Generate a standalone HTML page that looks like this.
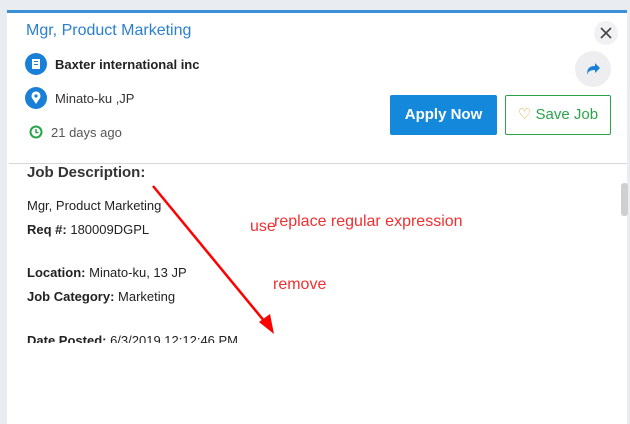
<!DOCTYPE html>
<html><head><style>
*{margin:0;padding:0;box-sizing:border-box}
body{width:630px;height:424px;background:#e9ecf1;font-family:"Liberation Sans",sans-serif;position:relative;overflow:hidden}
.card{position:absolute;left:7px;top:10px;width:620px;height:414px;background:#fff;border-top:3px solid #3a8fd6}
.a{position:absolute;white-space:nowrap}
.circ{position:absolute;width:22px;height:22px;border-radius:50%;background:#1a7fd6}
.t{color:#222;font-size:13px}
b{font-weight:bold}
.red{color:#f03030;font-size:16px;position:absolute;white-space:nowrap}
</style></head><body>
<div class="card"></div>
<div class="a" style="left:26px;top:22px;font-size:16px;color:#2a7fd0">Mgr, Product Marketing</div>
<div class="circ" style="left:25px;top:53px"><svg width="22" height="22"><rect x="7" y="6" width="8" height="10" fill="#fff"/><rect x="9" y="8" width="4" height="1" fill="#1a7fd6"/><rect x="9" y="11" width="4" height="1" fill="#1a7fd6"/></svg></div>
<div class="a" style="left:55px;top:57px;font-size:13px;font-weight:bold;color:#222">Baxter international inc</div>
<div class="circ" style="left:25px;top:87px"><svg width="22" height="22"><path d="M11 17 L7 11 A4.5 4.5 0 1 1 15 11 Z" fill="#fff"/><circle cx="11" cy="9" r="1.6" fill="#1a7fd6"/></svg></div>
<div class="a" style="left:55px;top:91px;font-size:13px;color:#333">Minato-ku ,JP</div>
<svg class="a" style="left:29px;top:125px" width="14" height="14"><circle cx="7" cy="7" r="5.5" fill="none" stroke="#2aa44a" stroke-width="2"/><path d="M7 4V7.5H9.5" fill="none" stroke="#2aa44a" stroke-width="1.5"/></svg>
<div class="a" style="left:51px;top:125px;font-size:13px;color:#555">21 days ago</div>
<div class="a" style="left:594px;top:21px;width:24px;height:24px;border-radius:50%;background:#f1f1f3"><svg width="24" height="24"><path d="M7 7L17 17M17 7L7 17" stroke="#444" stroke-width="1.6"/></svg></div>
<div class="a" style="left:575px;top:51px;width:36px;height:36px;border-radius:50%;background:#eeeef1"><svg width="36" height="36"><path d="M12 24 C12 17 15 15 20 15 V12 L25 17 L20 22 V19 C16 19 13 20 12 24Z" fill="#1a7fd6"/></svg></div>
<div class="a" style="left:390px;top:95px;width:107px;height:40px;background:#1489dc;border-radius:2px;color:#fff;font-weight:bold;font-size:15px;text-align:center;line-height:40px">Apply Now</div>
<div class="a" style="left:505px;top:95px;width:106px;height:40px;border:1px solid #2aa44a;border-radius:2px;color:#2aa44a;font-size:15px;text-align:center;line-height:38px"><span style="color:#d4a52a">♡</span> Save Job</div>
<div class="a" style="left:9px;top:163px;width:618px;height:1px;background:#d8d8d8"></div>
<div class="a" style="left:621px;top:183px;width:7px;height:33px;background:#cfcfcf;border-radius:3px"></div>
<div class="a" style="left:27px;top:163px;width:580px;height:180px;overflow:hidden">
<div class="a t" style="left:0;top:1px;font-size:15px;font-weight:bold;color:#333">Job Description:</div>
<div class="a t" style="left:0;top:35px">Mgr, Product Marketing</div>
<div class="a t" style="left:0;top:59px"><b>Req #:</b> 180009DGPL</div>
<div class="a t" style="left:0;top:102px"><b>Location:</b> Minato-ku, 13 JP</div>
<div class="a t" style="left:0;top:126px"><b>Job Category:</b> Marketing</div>
<div class="a t" style="left:0;top:170px"><b>Date Posted:</b> 6/3/2019 12:12:46 PM</div>
</div>
<div class="red" style="left:250px;top:218px">use</div>
<div class="red" style="left:274px;top:213px">replace regular expression</div>
<div class="red" style="left:273px;top:276px">remove</div>
<svg class="a" style="left:0;top:0" width="630" height="424"><line x1="153" y1="186" x2="265" y2="322" stroke="#f00" stroke-width="2.5"/><polygon points="274,334 259,322 270,314" fill="#f00"/></svg>
</body></html>
